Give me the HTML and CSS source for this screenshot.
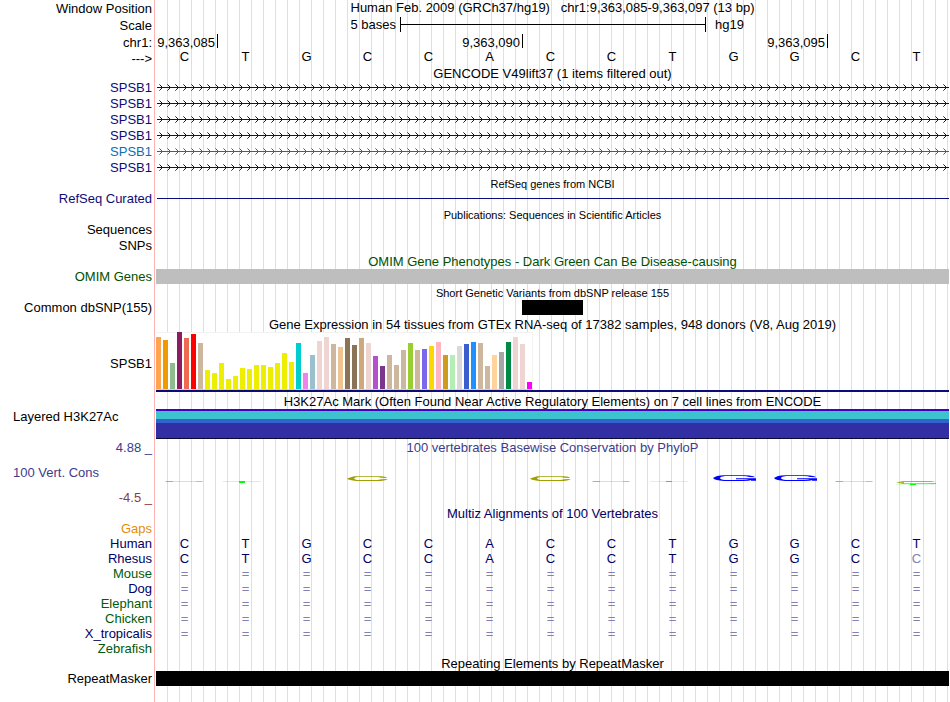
FILE: index.html
```html
<!DOCTYPE html>
<html lang="en">
<head>
    <meta charset="UTF-8">
    <meta name="viewport" content="width=device-width, initial-scale=1.0">
    <title>Human chr1:9,363,085-9,363,097 Genome Browser</title>
    <link rel="stylesheet" href="styles.css">
</head>
<body>
    <main class="browser">
        <!-- ruler -->
        <div class="row ruler">
            <div class="label">Window Position</div>
            <div class="position">Human Feb. 2009 (GRCh37/hg19) &nbsp; chr1:9,363,085-9,363,097 (13 bp)</div>
        </div>
        <div class="row ruler">
            <div class="label">Scale</div>
            <div class="scale">
                <span class="scale-size">5 bases</span>
                <span class="scale-bar"></span>
                <span class="scale-db">hg19</span>
            </div>
        </div>
        <div class="row ruler">
            <div class="label">chr1:</div>
            <div class="ticks">
                <span class="tick">9,363,085</span>
                <span class="tick">9,363,090</span>
                <span class="tick">9,363,095</span>
            </div>
        </div>
        <div class="row bases">
            <div class="label">---&gt;</div>
            <div class="seq" data-seq="CTGCCACCTGGCT"></div>
        </div>

        <!-- genes -->
        <div class="title tight">GENCODE V49lift37 (1 items filtered out)</div>
        <div class="genes" id="genes"></div>

        <div class="title small">RefSeq genes from NCBI</div>
        <div class="row navy">
            <div class="label">RefSeq Curated</div>
            <div class="line"></div>
        </div>

        <div class="title small">Publications: Sequences in Scientific Articles</div>
        <div class="row dense"><div class="label">Sequences</div></div>
        <div class="row dense"><div class="label">SNPs</div></div>

        <div class="title short green">OMIM Gene Phenotypes - Dark Green Can Be Disease-causing</div>
        <div class="row green">
            <div class="label">OMIM Genes</div>
            <div class="block gray"></div>
        </div>

        <div class="title small">Short Genetic Variants from dbSNP release 155</div>
        <div class="row">
            <div class="label">Common dbSNP(155)</div>
            <div class="snps"><div class="block snp"></div></div>
        </div>

        <!-- expression -->
        <div class="title tall">Gene Expression in 54 tissues from GTEx RNA-seq of 17382 samples, 948 donors (V8, Aug 2019)</div>
        <div class="row expression">
            <div class="label">SPSB1</div>
            <div class="gtex"><div class="bars" id="bars"></div></div>
        </div>

        <!-- regulation -->
        <div class="title tall">H3K27Ac Mark (Often Found Near Active Regulatory Elements) on 7 cell lines from ENCODE</div>
        <div class="row histone">
            <div class="label left">Layered H3K27Ac</div>
            <div class="layers"></div>
        </div>

        <!-- conservation -->
        <div class="row phylo-head">
            <div class="label phylo">4.88 _</div>
            <div class="title phylo">100 vertebrates Basewise Conservation by PhyloP</div>
        </div>
        <div class="row conservation">
            <div class="phylo-labels">
                <div class="label left phylo">100 Vert. Cons</div>
                <div class="label low">-4.5 _</div>
            </div>
            <svg class="wiggle" height="51" aria-hidden="true">
                <defs>
                    <g id="flat-c">
                        <rect x="0" y="0" width="38" height="1" fill="#a0a000" opacity=".3"/>
                        <rect x="1" y="0" width="7" height="1" fill="#a0a000" opacity=".6"/>
                        <rect x="31" y="0" width="6" height="1" fill="#a0a000" opacity=".4"/>
                    </g>
                    <g id="ring" fill="#a0a000">
                        <path d="M0 2.5L7 .3H34Q39 .5 40 2L34 1.7Q32 1.1 30 1.1H10Q7 1.8 7 2.5Q7 3.3 10 4H30Q32 4 34 3.2L41 3Q39 4.6 34 4.9H9Q2 4.5 0 2.5Z"/>
                    </g>
                    <g id="hook" fill="#0000ff">
                        <path d="M0 3Q3 .4 11 .2H32Q41 .6 42 2.2L36 2Q34 1.1 30 1H12Q7 1.7 7 3Q7 4.4 12 5H30Q34 4.9 36 4.2H23V3.2H43V5.8H38V5Q36 5.9 30 5.9H11Q2 5.6 0 3Z"/>
                    </g>
                </defs>
                <use href="#flat-c" x="9" y="26"/>
                <rect x="67" y="26" width="38" height="1" fill="#00ff00" opacity=".25"/>
                <rect x="83" y="26" width="6" height="2" fill="#00ff00"/>
                <use href="#ring" x="191" y="21"/>
                <use href="#ring" x="374" y="21"/>
                <use href="#flat-c" x="436" y="26"/>
                <rect x="494" y="26" width="38" height="1" fill="#00ff00" opacity=".2"/>
                <rect x="510" y="26" width="6" height="1" fill="#00ff00"/>
                <use href="#hook" x="557" y="20"/>
                <use href="#hook" x="618" y="20"/>
                <use href="#flat-c" x="679" y="26"/>
                <path d="M740 27.5L747 26H775L780 27L770 26.9H748V28.2H770L780 28V29H747Z" fill="#a0a000" opacity=".8"/>
                <rect x="740" y="29" width="38" height="1" fill="#00ff00" opacity=".15"/>
                <rect x="754" y="29" width="6" height="1" fill="#00ff00"/>
            </svg>
        </div>

        <!-- alignments -->
        <div class="title short deep">Multiz Alignments of 100 Vertebrates</div>
        <div class="row orange"><div class="label">Gaps</div></div>
        <div class="row deep"><div class="label">Human</div><div class="seq" data-seq="CTGCCACCTGGCT"></div></div>
        <div class="row deep"><div class="label">Rhesus</div><div class="seq" data-seq="CTGCCACCTGGCc"></div></div>
        <div class="row forest"><div class="label">Mouse</div><div class="seq" data-seq="============="></div></div>
        <div class="row deep"><div class="label">Dog</div><div class="seq" data-seq="============="></div></div>
        <div class="row forest"><div class="label">Elephant</div><div class="seq" data-seq="============="></div></div>
        <div class="row forest"><div class="label">Chicken</div><div class="seq" data-seq="============="></div></div>
        <div class="row deep"><div class="label">X_tropicalis</div><div class="seq" data-seq="============="></div></div>
        <div class="row forest"><div class="label">Zebrafish</div></div>

        <div class="title short">Repeating Elements by RepeatMasker</div>
        <div class="row">
            <div class="label">RepeatMasker</div>
            <div class="block"></div>
        </div>
    </main>

    <script>
        // one letter per base; lower case and "=" are drawn faded
        document.querySelectorAll('.seq').forEach(function(row) {
            for (const base of row.dataset.seq) {
                const cell = document.createElement('span');
                cell.textContent = base.toUpperCase();
                if (base === '=' || base !== base.toUpperCase()) {
                    cell.className = 'faded';
                }
                row.appendChild(cell);
            }
        });

        // transcripts, all intron with strand arrows
        const genes = ['navy', 'navy', 'navy', 'navy', 'blue', 'navy'];
        document.getElementById('genes').innerHTML = genes.map(function(color, i) {
            return `
                <div class="row dense ${color}">
                    <div class="label">SPSB1</div>
                    <svg class="intron" height="16" aria-hidden="true">
                        <pattern id="arrow${i}" width="8" height="16" patternUnits="userSpaceOnUse">
                            <path d="M5 7h1v1h-1zM5 9h1v1h-1zM4 6h1v1h-1zM4 10h1v1h-1z" fill="currentColor"/>
                            <path d="M3 5h1v1h-1zM3 11h1v1h-1z" fill="currentColor" opacity=".6"/>
                        </pattern>
                        <rect x="1" width="100%" height="16" fill="url(#arrow${i})"/>
                        <rect x="1" y="8" width="100%" height="1" fill="currentColor"/>
                    </svg>
                </div>`;
        }).join('');

        // GTEx median expression: [height, color]
        const tissues = [
            [52, '#ffa54f'], [49, '#ee9a00'], [26, '#8fbc8f'], [57, '#8b1c62'], [51, '#ee6a50'], [55, '#ff0000'],
            [46, '#cdb79e'], [19, '#eeee00'], [16, '#eeee00'], [26, '#eeee00'], [10, '#eeee00'], [13, '#eeee00'],
            [21, '#eeee00'], [20, '#eeee00'], [24, '#eeee00'], [24, '#eeee00'], [22, '#eeee00'], [26, '#eeee00'],
            [36, '#eeee00'], [27, '#eeee00'], [46, '#00cdcd'], [16, '#ee82ee'], [34, '#9ac0cd'], [48, '#eed5d2'],
            [52, '#eed5d2'], [45, '#cdb79e'], [42, '#eec591'], [51, '#8b7355'], [44, '#8b7355'], [51, '#cdaa7d'],
            [46, '#eed5d2'], [33, '#b452cd'], [23, '#7a378b'], [34, '#cdb79e'], [24, '#cdb79e'], [39, '#cdb79e'],
            [46, '#9acd32'], [39, '#cdb79e'], [40, '#7a67ee'], [43, '#ffd700'], [47, '#ffb6c1'], [34, '#cd9b1d'],
            [34, '#b4eeb4'], [43, '#d9d9d9'], [45, '#3a5fcd'], [47, '#1e90ff'], [46, '#cdb79e'], [23, '#cdb79e'],
            [34, '#ffd39b'], [37, '#a6a6a6'], [47, '#008b45'], [52, '#eed5d2'], [45, '#eed5d2'], [7, '#ff00ff']
        ];
        document.getElementById('bars').innerHTML = tissues.map(function(t) {
            return `<span class="bar" style="height: ${t[0]}px; background: ${t[1]}"></span>`;
        }).join('');
    </script>
</body>
</html>
```
FILE: styles.css
```css
body {
    margin: 0;
    background: white;
    color: black;
    font-family: "Liberation Sans", Arial, Helvetica, sans-serif;
    font-size: 13px;
    line-height: 15px;
}
.browser {
    box-sizing: border-box;
    min-height: 100vh;
    margin-right: 1px;
    background:
        linear-gradient(#ffb4b4, #ffb4b4) 154px 0 / 1px 100% no-repeat,
        repeating-linear-gradient(to right, transparent 0 11px, #dcdcf5 11px 12px) 156px 0 no-repeat;
    overflow: hidden;
}
.row {
    display: grid;
    grid-template-columns: 156px minmax(0, 1fr);
    min-height: 15px;
}
.label {
    padding-right: 4px;
    text-align: right;
    white-space: nowrap;
}
.label.left { padding-left: 13px; text-align: left; }

.title {
    margin-left: 156px;
    padding-top: 1px;
    text-align: center;
    white-space: nowrap;
}
.title.small { font-size: 11px; padding-top: 2px; line-height: 14px; }
.title.short { line-height: 14px; }
.title.tall { padding-top: 2px; }
.title.tight { height: 13px; padding-top: 0; }

/* colors */
.navy { color: #0c0c78; }
.blue { color: #0c70b0; }
.green { color: #005000; }
.forest { color: #005a0a; }
.deep { color: #000064; }
.orange { color: #e68c0a; }
.phylo { color: #3c3c8c; }
.low { color: #8c3c3c; }

/* ruler */
.ruler { line-height: 17px; }
.position { text-align: center; white-space: nowrap; line-height: 16px; }
.scale { display: grid; grid-template-columns: 4fr 5fr 4fr; line-height: 16px; }
.scale-size { padding-right: 4px; text-align: right; }
.scale-bar {
    height: 15px;
    margin-right: -1px;
    border: solid black;
    border-width: 0 1px;
    background: linear-gradient(black, black) 0 7px / 100% 1px no-repeat;
}
.scale-db { padding-left: 10px; }
.ticks { display: grid; grid-template-columns: 1fr 5fr 5fr 2fr; }
.tick {
    height: 14px;
    margin-right: -1px;
    padding-right: 2px;
    border-right: 1px solid black;
    text-align: right;
}
.bases .seq { line-height: 12px; }

.seq {
    display: grid;
    grid-template-columns: repeat(13, 1fr);
    margin: 0 2px 0 -2px;
    text-align: center;
}
.faded { color: #8080b4; }

/* tracks */
.dense { min-height: 16px; line-height: 16px; }
.genes .label { height: 16px; line-height: 18px; }
.intron { display: block; width: 100%; }
.line { margin-left: 1px; background: linear-gradient(#0c0c78, #0c0c78) 0 7px / 100% 1px no-repeat; }
.block { height: 15px; background: black; }
.block.gray { background: #bebebe; }
.snps { display: grid; grid-template-columns: repeat(13, 1fr); }
.snp { grid-column: 7; }

.expression .label { height: 60px; line-height: 64px; }
.gtex { border-bottom: 2px solid #0c0c78; padding-bottom: 1px; }
.bars {
    display: flex;
    align-items: flex-end;
    gap: 2px;
    box-sizing: border-box;
    width: max-content;
    height: 57px;
    padding-right: 1px;
    background: white;
    box-shadow: inset 0 1px #f2f2f2, inset -1px 0 #f2f2f2, 0 1px #d2d2d2;
}
.bar { width: 5px; }

.layers {
    height: 30px;
    background: linear-gradient(#4100c8 2px, #3cc3cd 2px 10px, #3264cd 10px 14px, #322fa5 14px 29px, #0a0a32 29px);
}

.phylo-head { line-height: 16px; }
.phylo-head .title { margin-left: 0; padding-top: 1px; line-height: 15px; }
.phylo-head .label { line-height: 18px; height: 16px; }
.phylo-labels { display: flex; flex-direction: column; gap: 10px; padding-top: 10px; }
.wiggle { display: block; width: 100%; }
```
